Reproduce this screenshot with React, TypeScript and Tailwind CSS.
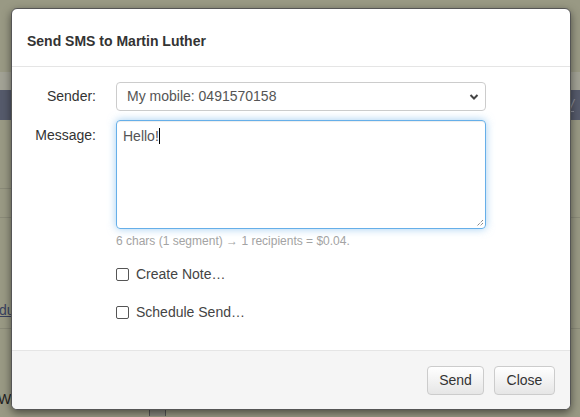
import React from "react";

export default function App() {
  return (
    <div
      className="relative w-[580px] h-[417px] overflow-hidden bg-[#999984]"
      style={{ fontFamily: '"Liberation Sans", Arial, sans-serif' }}
    >
      {/* page behind the backdrop */}
      <div className="flex flex-col">
        <div className="h-[72px]" />
        <div className="h-[18px] bg-[#a2a295]" />
        <div className="h-[30px] bg-[#555a6b] flex justify-end items-center pr-[6px]">
          <span className="text-[14px] italic underline text-[#8c8f99]">/</span>
        </div>
        <div className="h-[68px]" />
        <div className="h-px bg-[#8a8a78] w-[12px]" />
        <div className="h-[28px]" />
        <div className="h-px bg-[#8a8a78] w-full" />
        <div className="h-[101px] flex items-end">
          <span className="text-[14px] underline text-[#3a4260] -ml-[1px] mb-[-2px]">du</span>
        </div>
        <div className="h-[9px]" />
        <div className="h-px bg-[#8a8a78] w-full" />
        <div className="h-[78px] flex items-end">
          <span className="text-[14px] text-[#222] -ml-[2px] mb-[-3px]">Wit</span>
        </div>
        <div className="flex pl-[149px] -mt-[1px]">
          <div className="w-[17px] h-[10px] bg-[#8a8a80] border-x border-[#555]" />
        </div>
      </div>

      {/* modal */}
      <div className="absolute left-[11px] top-[8px] w-[560px] h-[402px] bg-white rounded-[6px] border border-[#555] shadow-[0_3px_9px_rgba(0,0,0,0.5)] flex flex-col overflow-hidden">
        <div className="h-[58px] border-b border-[#e5e5e5] flex items-start pt-[22px] px-[15px] shrink-0">
          <h4 className="text-[14px] font-bold text-[#333] leading-[20px]">
            Send SMS to Martin Luther
          </h4>
        </div>
        <div className="flex-1 flex flex-col pt-[15px] text-[14px] text-[#333]">
          <div className="flex items-center">
            <label className="w-[84px] text-right">Sender:</label>
            <div className="ml-[20px] relative w-[370px] h-[29px] border border-[#ccc] rounded-[4px] flex items-center pl-[10px] text-[#555]">
              <span>My mobile: 0491570158</span>
              <svg className="absolute right-[6px] top-[10px]" width="10" height="8" viewBox="0 0 10 8">
                <path d="M1.5 2 L5 5.5 L8.5 2" fill="none" stroke="#444" strokeWidth="2" />
              </svg>
            </div>
          </div>
          <div className="flex mt-[9px]">
            <label className="w-[84px] text-right pt-[5px]">Message:</label>
            <div className="ml-[20px] flex flex-col">
              <div className="relative w-[370px] h-[109px] border border-[#66afe9] rounded-[4px] shadow-[inset_0_1px_1px_rgba(0,0,0,0.075),0_0_8px_rgba(102,175,233,0.6)] px-[6px] pt-[5px] text-[#555]">
                <span>Hello!</span>
                <span className="inline-block w-px h-[16px] bg-[#000] align-[-3px]" />
                <svg className="absolute right-[1px] bottom-[1px]" width="8" height="8" viewBox="0 0 8 8">
                  <path d="M7 1 L1 7 M7 4 L4 7" stroke="#555" strokeWidth="1" strokeDasharray="1 1" />
                </svg>
              </div>
              <div className="text-[12px] text-[#a3a3a3] mt-[5px] leading-[14px]">
                6 chars (1 segment) → 1 recipients = $0.04.
              </div>
            </div>
          </div>
          <div className="flex flex-col pl-[104px] mt-[19px] gap-[24px]">
            <label className="flex items-center gap-[7px] h-[14px]">
              <span className="w-[13px] h-[13px] border border-[#555] rounded-[2px] bg-white" />
              <span className="text-[#444]">Create Note…</span>
            </label>
            <label className="flex items-center gap-[7px] h-[14px]">
              <span className="w-[13px] h-[13px] border border-[#555] rounded-[2px] bg-white" />
              <span className="text-[#444]">Schedule Send…</span>
            </label>
          </div>
        </div>
        <div className="h-[59px] shrink-0 border-t border-[#e5e5e5] bg-[#f5f5f5] flex items-center justify-end pr-[15px] gap-[10px]">
          <button className="h-[29px] w-[57px] rounded-[4px] border border-[#ccc] bg-gradient-to-b from-[#ffffff] to-[#e6e6e6] text-[14px] text-[#333]">
            Send
          </button>
          <button className="h-[29px] w-[61px] rounded-[4px] border border-[#ccc] bg-gradient-to-b from-[#ffffff] to-[#e6e6e6] text-[14px] text-[#333]">
            Close
          </button>
        </div>
      </div>
    </div>
  );
}
